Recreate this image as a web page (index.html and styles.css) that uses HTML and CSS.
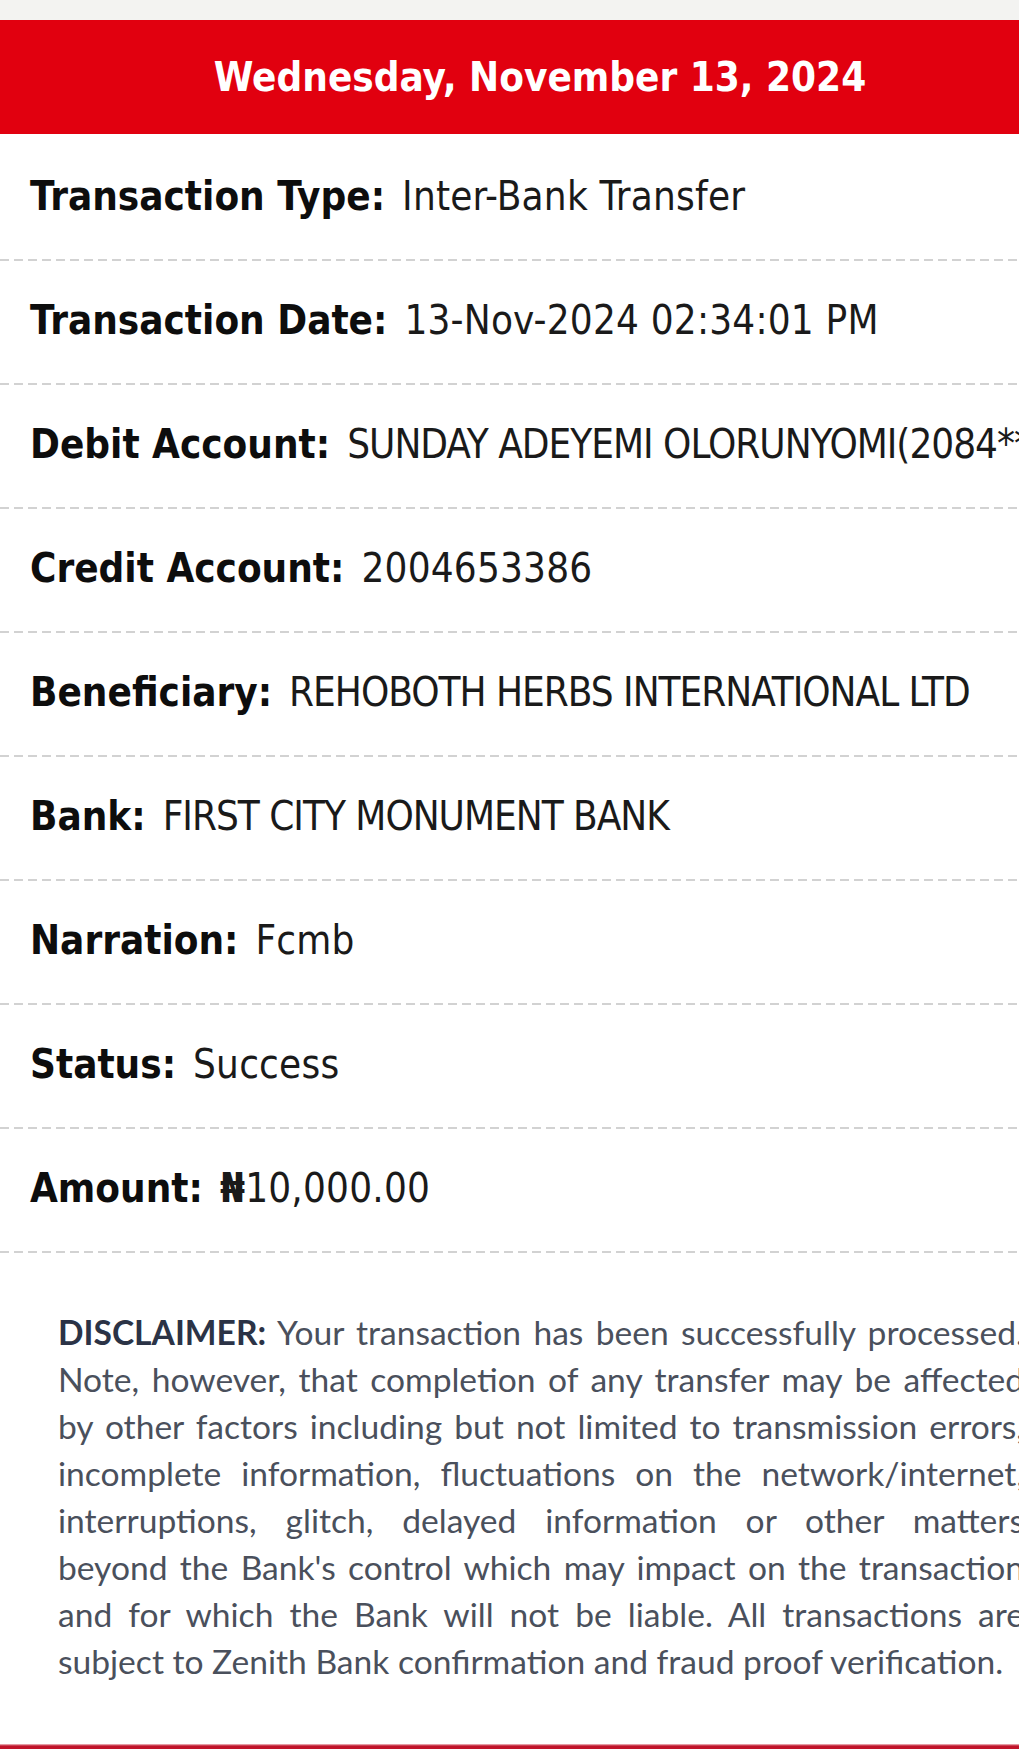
FILE: index.html
```html
<!DOCTYPE html>
<html>
<head>
<meta charset="utf-8">
<link rel="stylesheet" href="styles.css">
</head>
<body>
<div class="page">
  <div class="topbar"></div>
  <div class="header">Wednesday, November 13, 2024</div>
  <div class="rows">
    <div class="row"><span class="label">Transaction Type:</span><span class="value">Inter-Bank Transfer</span></div>
    <div class="row"><span class="label">Transaction Date:</span><span class="value">13-Nov-2024 02:34:01 PM</span></div>
    <div class="row"><span class="label">Debit Account:</span><span class="value caps">SUNDAY ADEYEMI OLORUNYOMI(2084****33)</span></div>
    <div class="row"><span class="label">Credit Account:</span><span class="value">2004653386</span></div>
    <div class="row"><span class="label">Beneficiary:</span><span class="value caps">REHOBOTH HERBS INTERNATIONAL LTD</span></div>
    <div class="row"><span class="label">Bank:</span><span class="value caps">FIRST CITY MONUMENT BANK</span></div>
    <div class="row"><span class="label">Narration:</span><span class="value">Fcmb</span></div>
    <div class="row"><span class="label">Status:</span><span class="value">Success</span></div>
    <div class="row"><span class="label">Amount:</span><span class="value"><span class="naira">₦</span>10,000.00</span></div>
  </div>
  <div class="disclaimer">
    <span class="line"><b>DISCLAIMER:</b> Your transaction has been successfully processed.</span>
    <span class="line">Note, however, that completion of any transfer may be affected</span>
    <span class="line">by other factors including but not limited to transmission errors,</span>
    <span class="line">incomplete information, fluctuations on the network/internet,</span>
    <span class="line">interruptions, glitch, delayed information or other matters</span>
    <span class="line">beyond the Bank's control which may impact on the transaction</span>
    <span class="line">and for which the Bank will not be liable. All transactions are</span>
    <span class="line last">subject to Zenith Bank confirmation and fraud proof verification.</span>
  </div>
  <div class="bottombar"></div>
</div>
</body>
</html>
```

FILE: styles.css
```css
html, body {
  margin: 0;
  padding: 0;
  background: #ffffff;
  overflow: hidden;
}

.page {
  width: 1080px;
  height: 1749px;
  display: flex;
  flex-direction: column;
  font-family: "DejaVu Sans Condensed", "DejaVu Sans", sans-serif;
  color: #111;
}

.topbar {
  height: 20px;
  background: #f3f3f1;
  flex: none;
}

.header {
  height: 114px;
  flex: none;
  background: #e1000f;
  color: #fff;
  font-weight: bold;
  font-size: 40px;
  display: flex;
  align-items: center;
  justify-content: center;
}

.rows {
  display: flex;
  flex-direction: column;
  padding-top: 3px;
}

.row {
  height: 124px;
  box-sizing: border-box;
  padding-left: 30px;
  padding-bottom: 6px;
  display: flex;
  align-items: center;
  gap: 17px;
  font-size: 40px;
  white-space: nowrap;
  background-image: repeating-linear-gradient(90deg, #d2d2d2 0 9px, transparent 9px 14px);
  background-size: 100% 2px;
  background-repeat: no-repeat;
  background-position: 0 100%;
}

.label {
  font-weight: bold;
  color: #0d0d0d;
}

.value {
  color: #1a1a1a;
  letter-spacing: 0.2px;
}

.value.caps {
  letter-spacing: -1px;
}

.naira {
  font-weight: bold;
}

.disclaimer {
  flex: 1;
  padding: 56px 56px 0 58px;
  font-family: Lato, sans-serif;
  font-size: 33.6px;
  line-height: 47px;
  color: #4a505c;
}

.disclaimer b {
  color: #2b3346;
  font-weight: bold;
}

.line {
  display: block;
  white-space: nowrap;
  text-align: justify;
  text-align-last: justify;
}

.line.last {
  text-align-last: left;
}

.bottombar {
  flex: none;
  height: 5px;
  background: linear-gradient(#f2c6c9, #c0142a 40%, #c0142a);
}
```
